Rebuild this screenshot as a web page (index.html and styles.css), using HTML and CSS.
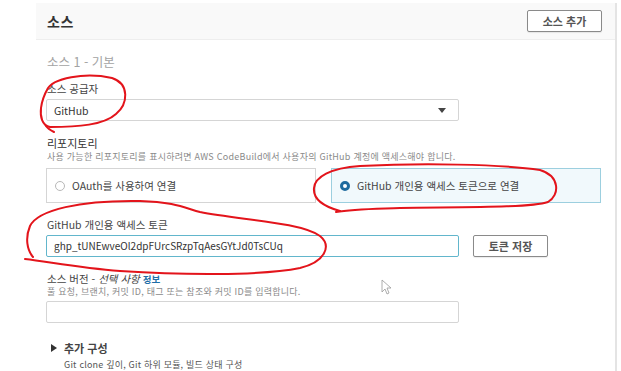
FILE: index.html
```html
<!DOCTYPE html>
<html lang="ko">
<head>
<meta charset="utf-8">
<link rel="stylesheet" href="styles.css">
</head>
<body>
<div class="panel">
  <div class="header">
    <h2 class="title">소스</h2>
    <button class="btn">소스 추가</button>
  </div>
  <div class="content">
    <div class="subtitle">소스 1 - 기본</div>

    <div class="field provider">
      <div class="label">소스 공급자</div>
      <div class="select"><span>GitHub</span><span class="caret"></span></div>
    </div>

    <div class="field repo">
      <div class="label strong">리포지토리</div>
      <div class="desc">사용 가능한 리포지토리를 표시하려면 AWS CodeBuild에서 사용자의 GitHub 계정에 액세스해야 합니다.</div>
      <div class="tiles">
        <div class="tile"><span class="radio"></span><span>OAuth를 사용하여 연결</span></div>
        <div class="tile selected"><span class="radio on"></span><span>GitHub 개인용 액세스 토큰으로 연결</span></div>
      </div>
    </div>

    <div class="field token">
      <div class="label">GitHub 개인용 액세스 토큰</div>
      <div class="row">
        <div class="input focus">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</div>
        <button class="btn">토큰 저장</button>
      </div>
    </div>

    <div class="field version">
      <div class="label">소스 버전 - <i>선택 사항</i> <a class="info">정보</a></div>
      <div class="desc">풀 요청, 브랜치, 커밋 ID, 태그 또는 참조와 커밋 ID를 입력합니다.</div>
      <div class="input"></div>
    </div>

    <div class="extra">
      <div class="extra-title"><span class="tri"></span>추가 구성</div>
      <div class="extra-desc">Git clone 깊이, Git 하위 모듈, 빌드 상태 구성</div>
    </div>
  </div>
</div>

<svg class="marks" width="621" height="371" viewBox="0 0 621 371">
  <g fill="none" stroke="#e3141b" stroke-width="2" stroke-linecap="round">
    <path d="M47,90 C52,78 85,72 112,78 C130,84 128,104 116,114 C104,125 78,127 50,127 C42,126 40,116 41,108 C42,100 44,95 48,88"/>
    <path d="M46,126 C48,129 50,130 54,132"/>
    <path d="M340,211 C322,206 313,198 314,188 C315,177 330,168 360,166 C420,163 500,164 540,170 C560,176 560,195 548,202 C530,208 460,207 400,208 C370,209 352,209 336,212"/>
    <path d="M33,257 C27,250 25,238 30,226 C38,210 80,200 140,201 C175,202 185,208 200,212 C240,220 300,222 320,236 C332,246 325,262 300,268 C260,276 180,275 120,271 C80,268 50,262 25,259"/>
  </g>
  <path d="M382,280 L382,292 L385,289 L387,294 L389,293 L387,288 L391,288 Z" fill="#fff" stroke="#999" stroke-width="0.8"/>
</svg>
</body>
</html>
```

FILE: styles.css
```css
* { box-sizing: border-box; }
body {
  margin: 0;
  background: #fff;
  font-family: "Noto Sans CJK KR", "Noto Sans", sans-serif;
  color: #444;
  width: 621px;
  height: 371px;
  overflow: hidden;
  position: relative;
}
.panel {
  margin: 3px 0 0 36px;
  width: 581px;
  height: 368px;
  border-right: 2px solid #e4e4e4;
}
.header {
  height: 37px;
  background: #f9f9f9;
  border-bottom: 1px solid #eeeeee;
  display: flex;
  align-items: center;
  justify-content: space-between;
  padding: 0 13px 0 11px;
}
.title {
  margin: 0;
  font-size: 14px;
  font-weight: 700;
  color: #333;
  letter-spacing: 0.5px;
}
.btn {
  font-family: inherit;
  background: #fff;
  border: 1px solid #8a8a8a;
  border-radius: 2px;
  font-size: 11px;
  font-weight: 700;
  color: #555;
  height: 22px;
  width: 75px;
  padding: 0;
  box-shadow: 0 1px 1px rgba(0,0,0,0.08);
}
.content {
  padding: 0 0 0 10px;
}
.subtitle {
  margin-top: 12px;
  font-size: 12.5px;
  color: #a3a3a3;
  height: 20px;
  line-height: 20px;
  padding-left: 1px;
}
.label {
  font-size: 10.5px;
  color: #444;
  height: 15px;
  line-height: 15px;
  padding-left: 1px;
}
.label.strong { font-size: 11px; color: #333; }
.label i { font-style: italic; }
.info {
  color: #1f6fa8;
  font-weight: 700;
  font-size: 9.5px;
}
.desc {
  font-size: 9px;
  letter-spacing: 0.25px;
  color: #8a8a8a;
  height: 12px;
  line-height: 12px;
  white-space: nowrap;
  padding-left: 1px;
}
.provider { margin-top: 9px; }
.provider .label { margin-bottom: 3px; }
.select {
  width: 413px;
  height: 22px;
  border: 1px solid #d5d5d5;
  border-radius: 2px;
  display: flex;
  align-items: center;
  justify-content: space-between;
  padding: 0 12px 0 7px;
  font-size: 10.5px;
  color: #333;
}
.caret {
  width: 0; height: 0;
  border-left: 4px solid transparent;
  border-right: 4px solid transparent;
  border-top: 5px solid #444;
}
.repo { margin-top: 15px; }
.tiles {
  margin-top: 5px;
  display: flex;
  gap: 15px;
}
.tile {
  width: 270px;
  height: 35px;
  border: 1px solid #d5d5d5;
  display: flex;
  align-items: center;
  gap: 7px;
  padding-left: 8px;
  font-size: 10.5px;
  color: #444;
}
.tile.selected {
  background: #f1f9fc;
  border-color: #9ccfdf;
}
.radio {
  width: 10px; height: 10px;
  border-radius: 50%;
  border: 1px solid #b8b8b8;
  background: #fff;
}
.radio.on {
  border: 3px solid #1f6b9e;
}
.token { margin-top: 14px; }
.token .label { margin-bottom: 3px; }
.row { display: flex; gap: 14px; align-items: center; }
.input {
  width: 413px;
  height: 22px;
  border: 1px solid #d5d5d5;
  border-radius: 2px;
  font-size: 10px;
  color: #333;
  padding-left: 7px;
  line-height: 20px;
}
.input.focus { border-color: #62b6cc; }
.version { margin-top: 14px; }
.version .desc { margin-bottom: 3px; }
.extra { margin-top: 17px; padding-left: 5px; }
.extra-title {
  font-size: 11px;
  font-weight: 700;
  color: #444;
  display: flex;
  align-items: center;
  gap: 7px;
  height: 16px;
}
.tri {
  width: 0; height: 0;
  border-top: 4px solid transparent;
  border-bottom: 4px solid transparent;
  border-left: 6px solid #333;
}
.extra-desc {
  font-size: 9px;
  letter-spacing: 0.2px;
  color: #555;
  padding-left: 13px;
  margin-top: 2px;
}
.marks {
  position: absolute;
  left: 0; top: 0;
  pointer-events: none;
}
```
